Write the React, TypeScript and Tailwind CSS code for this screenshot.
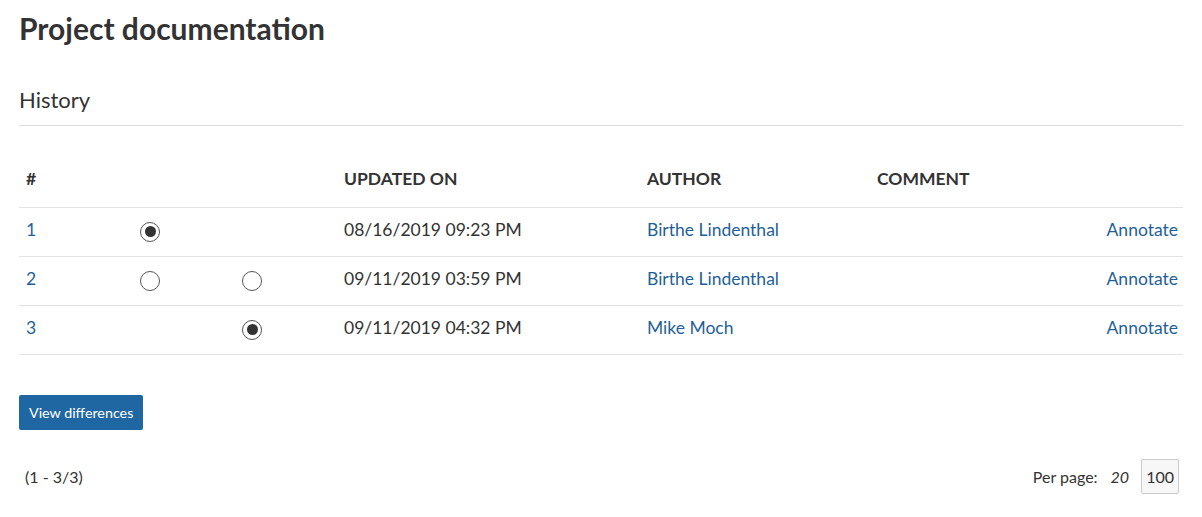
import React from 'react'

const rows = [
  { id: 1, from: true, to: null as boolean | null, date: '08/16/2019 09:23 PM', author: 'Birthe Lindenthal' },
  { id: 2, from: false, to: false, date: '09/11/2019 03:59 PM', author: 'Birthe Lindenthal' },
  { id: 3, from: null as boolean | null, to: true, date: '09/11/2019 04:32 PM', author: 'Mike Moch' },
]

function Radio({ checked }: { checked: boolean }) {
  return (
    <span className="inline-flex w-[20px] h-[20px] rounded-full border border-[#555] bg-white items-center justify-center align-middle">
      {checked && <span className="w-[11px] h-[11px] rounded-full bg-[#333]"></span>}
    </span>
  )
}

export default function App() {
  return (
    <div className="bg-white min-h-screen px-[19px] pt-[10px] text-[#333] font-['Lato','Open_Sans',sans-serif]">
      <h1 className="text-[30px] leading-[36px] font-bold">Project documentation</h1>

      <h2 className="mt-[40px] text-[22px] leading-[28px] pb-[11px] border-b border-[#ddd]">History</h2>

      <table className="w-full mt-[40px] text-[17.5px] border-collapse">
        <thead>
          <tr className="border-b border-[#e3e3e3]">
            <th className="text-left font-bold pl-[7px] pb-[15px] pt-0 w-[90px]">#</th>
            <th className="w-[102px]"></th>
            <th className="w-[133px]"></th>
            <th className="text-left font-bold uppercase pb-[15px] w-[303px]">Updated on</th>
            <th className="text-left font-bold uppercase pb-[15px] w-[230px]">Author</th>
            <th className="text-left font-bold uppercase pb-[15px]">Comment</th>
            <th></th>
          </tr>
        </thead>
        <tbody>
          {rows.map((r) => (
            <tr key={r.id} className="border-b border-[#e3e3e3] h-[49px] [&>td]:pb-[4px]">
              <td className="pl-[7px]">
                <a href="#" className="text-[#1f5f99]">{r.id}</a>
              </td>
              <td className="pl-[31px]">{r.from !== null && <Radio checked={r.from} />}</td>
              <td className="pl-[31px]">{r.to !== null && <Radio checked={r.to} />}</td>
              <td>{r.date}</td>
              <td>
                <a href="#" className="text-[#1f5f99]">{r.author}</a>
              </td>
              <td></td>
              <td className="text-right pr-[5px]">
                <a href="#" className="text-[#1f5f99]">Annotate</a>
              </td>
            </tr>
          ))}
        </tbody>
      </table>

      <button className="mt-[40px] h-[35px] px-[10px] rounded-[2px] bg-[#1f67a3] text-white text-[14.3px]">
        View differences
      </button>

      <div className="mt-[29px] flex items-center justify-between text-[16px]">
        <span className="pl-[6px]">(1 - 3/3)</span>
        <div className="flex items-center pr-[4px]">
          <span>Per page:</span>
          <span className="ml-[13px] italic">20</span>
          <span className="ml-[12px] h-[35px] px-[4px] flex items-center border border-[#ccc] rounded-[2px] bg-[#f7f7f7]">100</span>
        </div>
      </div>
    </div>
  )
}
